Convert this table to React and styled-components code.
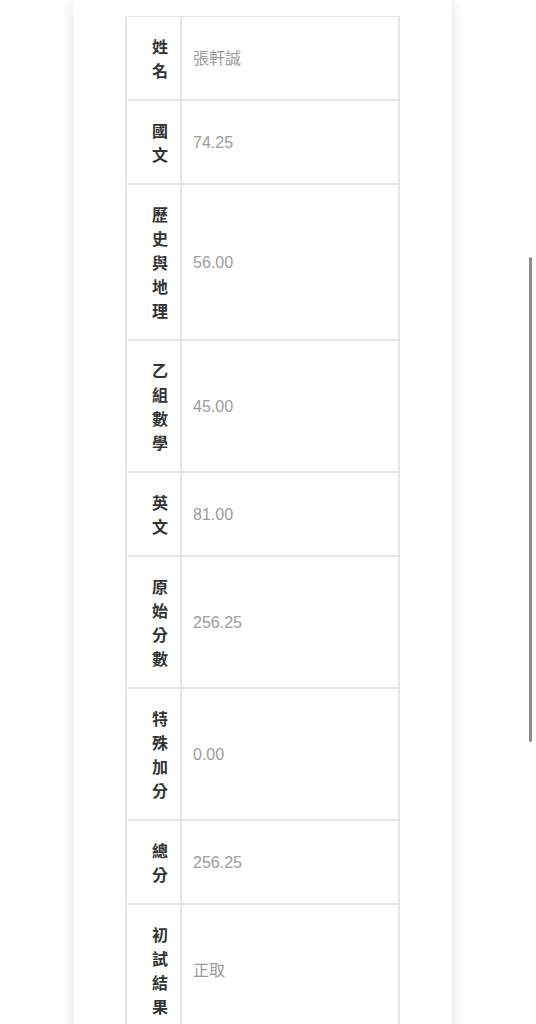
import styled, { createGlobalStyle } from 'styled-components';

const GlobalStyle = createGlobalStyle`
  html, body {
    margin: 0;
    height: 100%;
    overflow: hidden;
    background: #fff;
  }
  body {
    font-family: "Liberation Sans", "Noto Sans CJK TC", sans-serif;
  }
`;

const Page = styled.div`
  height: 1024px;
  overflow: hidden;
  position: relative;
`;

const Card = styled.div`
  margin-left: 73px;
  width: 379px;
  min-height: 1100px;
  padding: 16px 52px 0;
  box-sizing: border-box;
  background: #fff;
  box-shadow: 0 0 14px rgba(0, 0, 0, 0.12);
`;

const Table = styled.table`
  width: 100%;
  border-collapse: collapse;
  border: 2px solid #e6e6e6;
  border-top-width: 1px;
`;

const Row = styled.tr`
  border-bottom: 2px solid #e6e6e6;
`;

const Label = styled.th`
  width: 16px;
  padding: 17px 12px 17px 25px;
  border-right: 2px solid #e6e6e6;
  font-family: "Noto Sans CJK TC", sans-serif;
  font-size: 16px;
  line-height: 24px;
  font-weight: 700;
  color: #333;
  text-align: right;
  vertical-align: middle;
`;

const Value = styled.td`
  padding: 18px 12px 16px 11px;
  font-size: 16px;
  line-height: 24px;
  font-weight: 400;
  color: #9c9c9c;
  vertical-align: middle;
`;

const Scrollbar = styled.div`
  position: absolute;
  right: 4px;
  top: 257px;
  width: 3px;
  height: 485px;
  border-radius: 2px;
  background: #8c8c8c;
`;

const rows = [
  ['姓名', '張軒誠'],
  ['國文', '74.25'],
  ['歷史與地理', '56.00'],
  ['乙組數學', '45.00'],
  ['英文', '81.00'],
  ['原始分數', '256.25'],
  ['特殊加分', '0.00'],
  ['總分', '256.25'],
  ['初試結果', '正取'],
];

export default function App() {
  return (
    <>
      <GlobalStyle />
      <Page>
        <Card>
          <Table>
            <tbody>
              {rows.map(([label, value]) => (
                <Row key={label}>
                  <Label>{label}</Label>
                  <Value>{value}</Value>
                </Row>
              ))}
            </tbody>
          </Table>
        </Card>
        <Scrollbar />
      </Page>
    </>
  );
}
